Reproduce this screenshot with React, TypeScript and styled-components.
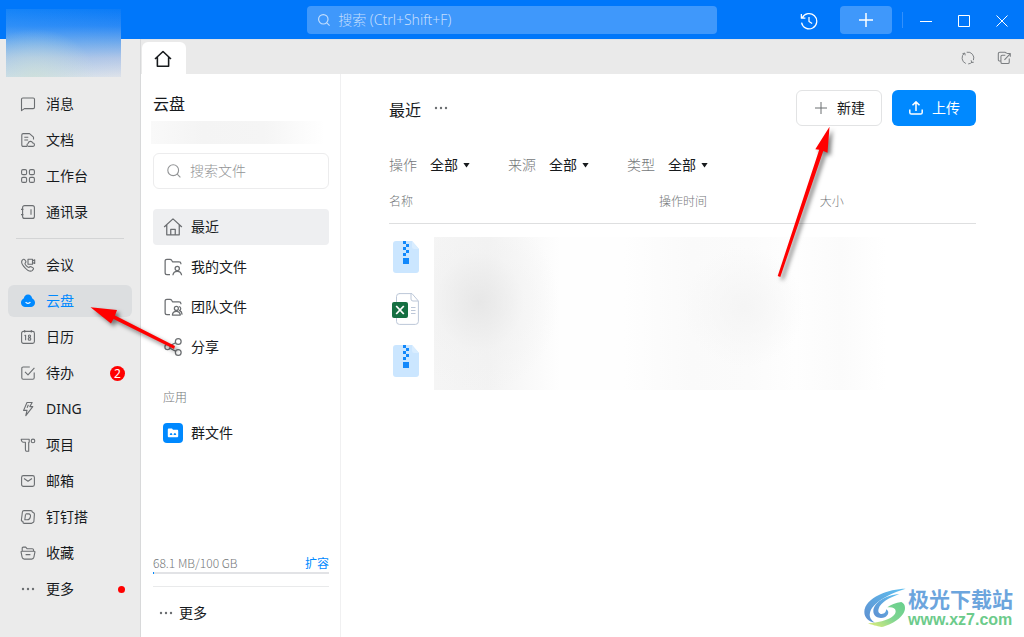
import React from "react";
import styled, { createGlobalStyle, css } from "styled-components";

const Global = createGlobalStyle`
  *, *::before, *::after { box-sizing: border-box; }
  body {
    margin: 0;
    background: #fff;
    color: #171a1d;
    font-family: "Noto Sans", "Noto Sans CJK SC", sans-serif;
    font-size: 14px;
    font-weight: 400;
    line-height: 20px;
  }
  button, input, select { font: inherit; color: inherit; }
  button { cursor: pointer; border: 0; background: none; padding: 0; }
  h1, h2, h3, p, ul { margin: 0; padding: 0; font-weight: inherit; }
  ul { list-style: none; }
  a { color: inherit; text-decoration: none; }
`;

const Page = styled.div`
  position: relative;
  display: flex;
  flex-direction: column;
  min-height: 100vh;
  overflow: hidden;
`;

const Header = styled.header`
  display: grid;
  grid-template-columns: 3fr 4fr 3fr;
  align-items: center;
  height: 39px;
  background: #0077fa;
  color: #fff;
`;

const HeaderSearch = styled.label`
  grid-column: 2;
  display: flex;
  align-items: center;
  gap: 7px;
  height: 28px;
  padding: 0 10px;
  border-radius: 4px;
  background: #3f98fb;
  color: #c3defd;
`;

const PlainInput = styled.input`
  flex: 1;
  min-width: 0;
  padding: 0;
  border: 0;
  outline: 0;
  background: none;
  font-weight: 300;
  &::placeholder { color: currentColor; opacity: 1; }
`;

const WindowTools = styled.div`
  display: flex;
  align-items: center;
  justify-content: flex-end;
  padding-right: 12px;
`;

const WindowButton = styled.button`
  display: grid;
  place-items: center;
  width: 20px;
  height: 28px;
  padding-top: 2px;
  margin-left: 18px;
`;

const AddButton = styled.button`
  display: grid;
  place-items: center;
  width: 52px;
  height: 28px;
  margin-left: 21px;
  border-radius: 4px;
  background: #3f98fb;
`;

const ToolDivider = styled.span`
  width: 1px;
  height: 16px;
  margin: 0 -5px 0 10px;
  background: #3390fb;
`;

const Body = styled.div`
  display: flex;
  flex: 1;
`;

const Sidebar = styled.nav`
  flex: none;
  width: 141px;
  padding: 49px 8px 8px;
  border-right: 1px solid #d8d9da;
  background: #ebebeb;
`;

const Profile = styled.div`
  position: absolute;
  left: 6px;
  top: 9px;
  width: 115px;
  height: 68px;
  background:
    radial-gradient(ellipse at 25% 100%, rgba(205, 224, 214, 0.7), transparent 50%),
    linear-gradient(90deg, rgba(70, 170, 255, 0.16), rgba(0, 90, 230, 0.02)),
    linear-gradient(#0b7cf7 0%, #2b8af6 25%, #75adec 50%, #b5c9e7 72%, #e2e5ea 100%);
`;

const SideList = styled.ul`
  display: flex;
  flex-direction: column;
  gap: 4px;
`;

const SideDivider = styled.hr`
  height: 1px;
  margin: 10px 8px;
  border: 0;
  background: #d3d4d5;
`;

const SideItem = styled.button<{ $active?: boolean }>`
  display: flex;
  align-items: center;
  gap: 10px;
  width: 124px;
  height: 32px;
  padding: 0 7px 0 12px;
  border-radius: 6px;
  ${(p) => p.$active && css`background: #dcdee0; color: #0089ff;`}
  svg { color: ${(p) => (p.$active ? "#0089ff" : "#6b6e71")}; }
`;

const Count = styled.span`
  width: 15px;
  height: 15px;
  margin-left: auto;
  border-radius: 8px;
  background: #f00;
  color: #fff;
  font-size: 12px;
  line-height: 15px;
  text-align: center;
`;

const Dot = styled.span`
  width: 7px;
  height: 7px;
  margin-left: auto;
  border-radius: 4px;
  background: #f00;
`;

const Workspace = styled.div`
  display: flex;
  flex: 1;
  flex-direction: column;
  min-width: 0;
`;

const TabStrip = styled.div`
  display: flex;
  align-items: flex-end;
  height: 35px;
  padding: 0 12px 0 1px;
  border-top: 1px solid #dfe3e8;
  background: #eaeaea;
`;

const HomeTab = styled.button`
  display: grid;
  place-items: center;
  width: 44px;
  height: 32px;
  margin-right: auto;
  padding: 2px 2px 0 0;
  border-radius: 6px 6px 0 0;
  background: #fff;
`;

const StripButton = styled.button`
  display: grid;
  place-items: center;
  width: 16px;
  height: 32px;
  margin-left: 20px;
  color: #7b7e81;
`;

const Columns = styled.div`
  display: flex;
  flex: 1;
`;

const DrivePanel = styled.aside`
  display: flex;
  flex: none;
  flex-direction: column;
  width: 200px;
  padding: 18px 11px 14px 12px;
  border-right: 1px solid #f0f0f1;
`;

const Title = styled.h1`
  font-size: 16px;
  line-height: 24px;
`;

const OrgName = styled.div`
  height: 23px;
  margin: 5px 4px 9px -2px;
  background: linear-gradient(90deg, #f9f9f9, #f4f4f4 30%, #f5f5f5 65%, #fff);
`;

const FileSearch = styled.label`
  display: flex;
  align-items: center;
  gap: 8px;
  height: 36px;
  margin-bottom: 20px;
  padding: 0 12px;
  border: 1px solid #ececed;
  border-radius: 6px;
  color: #929496;
`;

const DriveList = styled.ul`
  display: flex;
  flex-direction: column;
  gap: 4px;
`;

const DriveItem = styled.button<{ $active?: boolean }>`
  display: flex;
  align-items: center;
  gap: 8px;
  width: 100%;
  height: 36px;
  padding: 0 10px;
  border-radius: 4px;
  background: ${(p) => (p.$active ? "#eeeff1" : "none")};
  svg { color: #6b6e71; }
`;

const GroupTitle = styled.h2`
  margin: 23px 10px 7px;
  color: #747779;
  font-size: 12px;
  font-weight: 300;
`;

const DriveFoot = styled.div`
  margin-top: auto;
`;

const Quota = styled.div`
  display: flex;
  justify-content: space-between;
  color: #747779;
  font-family: "Noto Sans CJK SC", sans-serif;
  font-size: 12px;
  font-weight: 300;
  line-height: 18px;
  a { color: #0089ff; font-weight: 400; }
`;

const QuotaBar = styled.div`
  height: 2px;
  margin-bottom: 12px;
  background: linear-gradient(90deg, #0089ff 1px, #e2e3e6 1px);
`;

const FootMore = styled.button`
  display: flex;
  align-items: center;
  gap: 5px;
  width: 100%;
  padding: 16px 5px 0;
  border-top: 1px solid #e9eaeb;
  svg { color: #6b6e71; }
`;

const Main = styled.main`
  position: relative;
  flex: 1;
  min-width: 0;
  padding: 16px 48px;
`;

const MainHead = styled.div`
  display: flex;
  align-items: center;
  gap: 10px;
  height: 36px;
  margin-bottom: 29px;
`;

const MainTitle = styled(Title)`
  padding-top: 4px;
`;

const MoreButton = styled.button`
  display: grid;
  margin: 0 auto 0 2px;
  color: #6b6e71;
`;

const ActionButton = styled.button<{ $primary?: boolean }>`
  display: flex;
  align-items: center;
  justify-content: center;
  gap: 8px;
  height: 36px;
  padding: 0 16px;
  border-radius: 6px;
  ${(p) =>
    p.$primary
      ? css`background: #0089ff; color: #fff;`
      : css`
          border: 1px solid #e2e3e4;
          background: #fff;
          svg { color: #6b6e71; }
        `}
`;

const Filters = styled.div`
  display: flex;
  gap: 37px;
  margin-bottom: 6px;
`;

const Filter = styled.label`
  display: flex;
  align-items: center;
  gap: 13px;
  color: #747779;
  font-weight: 300;
`;

const SelectWrap = styled.span`
  display: flex;
  align-items: center;
  color: #171a1d;
  select {
    width: 32px;
    height: 20px;
    margin-right: 1px;
    padding: 0;
    border: 0;
    appearance: none;
    background: none;
    font-weight: 400;
  }
`;

const Caret = styled.span`
  width: 7px;
  height: 5px;
  margin-right: 1px;
  background: #171a1d;
  clip-path: polygon(0 0, 100% 0, 50% 100%);
`;

const TableArea = styled.div`
  position: relative;
`;

const FileTable = styled.table`
  width: 100%;
  border-collapse: separate;
  border-spacing: 0;
  table-layout: fixed;
  margin-bottom: 20px;
  th {
    height: 43px;
    padding: 0;
    border-bottom: 1px solid #dedfe0;
    color: #747779;
    font-size: 12px;
    font-weight: 300;
    text-align: left;
  }
  td { height: 52px; padding: 0 3px; }
  tbody::before { content: ""; display: block; height: 7px; }
  svg { display: block; }
`;

const Column = styled.col<{ $width: string }>`
  width: ${(p) => p.$width};
`;

const HiddenNames = styled.div`
  position: absolute;
  left: 45px;
  right: 90px;
  bottom: -3px;
  height: 153px;
  background:
    radial-gradient(ellipse 80px 90px at 45px 65px, rgba(228, 228, 228, 0.8), rgba(240, 240, 240, 0.4) 55%, transparent),
    radial-gradient(ellipse 60px 60px at 310px 70px, rgba(244, 244, 244, 0.9), transparent),
    linear-gradient(90deg, #f5f5f5, #f3f3f3 12%, #fefefe 28%, #fefefe 42%, #fafafa 57%, #fbfbfb 70%, #fefefe 80%, #fbfbfb 90%, #fff);
`;

const Pointer = styled.svg<{ $x: string; $top: number }>`
  position: absolute;
  ${(p) => p.$x};
  top: ${(p) => p.$top}px;
  pointer-events: none;
  filter: drop-shadow(3px 3px 2px rgba(0, 0, 0, 0.5));
`;

const Watermark = styled.div`
  position: absolute;
  right: 11px;
  bottom: 8px;
  display: flex;
  align-items: center;
  gap: 2px;
`;

const SiteName = styled.div`
  color: #6ca5dd;
  font-size: 21px;
  font-weight: 700;
  line-height: 24px;
`;

const SiteUrl = styled.div`
  color: #6ccb8b;
  font-family: "Liberation Sans", sans-serif;
  font-size: 16px;
  font-weight: 700;
  line-height: 18px;
`;

function Icon({ size = 16, children, width = 1.1 }: { size?: number; children: React.ReactNode; width?: number }) {
  return (
    <svg width={size} height={size} viewBox="0 0 16 16" fill="none" stroke="currentColor" strokeWidth={width} strokeLinejoin="round" aria-hidden="true">
      {children}
    </svg>
  );
}

const dots = (
  <g fill="currentColor" stroke="none">
    <circle cx="3" cy="8" r="1.2" /><circle cx="8" cy="8" r="1.2" /><circle cx="13" cy="8" r="1.2" />
  </g>
);

const icons = {
  message: <path d="M2.8 2h10.4c.8 0 1.3.5 1.3 1.3v8c0 .8-.5 1.3-1.3 1.3H4.4L1.5 14.6V3.3C1.5 2.500 2 2 2.800 2z" />,
  doc: <><path d="M7 14.4H3.2c-.9 0-1.4-.6-1.4-1.4V3c0-.9.6-1.4 1.4-1.4h6.3l4 3.600v2.300M4.300 5.200h4M4.300 8h3.800" /><path d="M8.700 14.400c-1.800 0-2.500-2.400-.6-3 .4-2.500 3.800-2.800 4.500-.5 2.500.1 2.400 3.500.2 3.500z" /></>,
  apps: <><rect x="1.600" y="1.600" width="5" height="5" rx="1.400" /><rect x="9.400" y="1.600" width="5" height="5" rx="1.400" /><rect x="1.600" y="9.400" width="5" height="5" rx="1.400" /><rect x="9.400" y="9.400" width="5" height="5" rx="1.400" /></>,
  contacts: <><rect x="2.600" y="1.600" width="11.800" height="12.800" rx="2" /><path d="M11 5.200v5.600M1 5.400h2.400M1 10.600h2.400" /></>,
  meeting: <><path d="M2.100 3.400c1-1.400 2-1.500 2.700-.6l1 1.500c.4.8.1 1.200-.8 2.100-.3 1 2.700 4.200 4 4 .8-.9 1.400-1 2.100-.7l2 1.200c.8.6.4 1.500-.9 2.700C8.900 16.200-.2 7 2.100 3.400z" /><path d="M8 2.200h4.500v5H8zM12.500 4l2.200-1.200v3.600l-2.200-1" /></>,
  drive: <><path d="M8 1.400c2.600 0 3.700 1.800 4.100 3.800 4.400 2.200 3.600 8.700-.9 8.700H4.800C.3 13.900-.5 7.400 3.900 5.200 4.300 3.200 5.400 1.400 8 1.400z" fill="currentColor" stroke="none" /><path d="M5.600 9.200c1.200 1.600 3.600 1.600 4.800 0" stroke="#fff" /></>,
  calendar: <><rect x="1.600" y="2.400" width="12.800" height="12" rx="1.800" /><path d="M4.700.9v2.500M11.300.9v2.500M5.600 6v5.200M4.600 6.800l1-.8" /><circle cx="9.500" cy="7.100" r="1.100" /><circle cx="9.500" cy="9.900" r="1.300" /></>,
  todo: <><path d="M9.800 2H3.200c-.9 0-1.400.6-1.400 1.400v9.400c0 .9.6 1.400 1.400 1.400h9.600c.9 0 1.400-.6 1.400-1.400V7.500" /><path d="M5 6.800l3 3 6.400-7" /></>,
  ding: <path d="M7 1.500h5.200L9.800 5.600h3L5.800 14.600l1.200-5.200H3.600zM8.400 3.700L7.100 6.800" />,
  project: <><path d="M1.200 2.300h8v3H8.700v8.900H6.200c-.8-.6-.8-1.200-.8-2V5.300H3.400c-1.300 0-2-1-2.200-3z" /><circle cx="13" cy="3.900" r="1.800" /></>,
  mail: <><rect x="1.600" y="2.600" width="12.800" height="10.800" rx="1.800" /><path d="M4 5.500l4 2.800 4-2.800" /></>,
  build: <><path d="M4 1.600h6.800c.9 0 1.500.6 1.500 1.400l1.300.8c.6.300.9.800.8 1.500l-.5 7c-.1.600-.4 1-.9 1.200l-1.300.7c-.3.200-.6.200-1 .2H4.300c-.9 0-1.400-.6-1.400-1.300v-.9h-.4c-.8 0-1.200-.5-1.100-1.200l1-8c.1-.9.700-1.400 1.600-1.400z" /><path d="M5.700 4.900h2.900c3.200 0 2 5.800-1.300 5.800H4.800l.7-5.300" /></>,
  favorite: <><path d="M2.200 6.200V3.300c0-.7.400-1.200 1.100-1.200h2.400L7 3.700h5.300c.8 0 1.200.4 1.200 1.100v1.400M1.800 6.200h12.400c.6 0 .9.4.7 1l-1 5c-.3 1.300-1 1.900-2.200 1.900H4.300c-1.200 0-1.900-.6-2.200-1.900l-1-5c-.2-.6.1-1 .7-1zM5.600 9.600h4.800" /></>,
  more: dots,
};

type Entry = { icon: keyof typeof icons; label: string; active?: boolean; count?: number; dot?: boolean };

const mainEntries: Entry[] = [
  { icon: "message", label: "消息" },
  { icon: "doc", label: "文档" },
  { icon: "apps", label: "工作台" },
  { icon: "contacts", label: "通讯录" },
];

const toolEntries: Entry[] = [
  { icon: "meeting", label: "会议" },
  { icon: "drive", label: "云盘", active: true },
  { icon: "calendar", label: "日历" },
  { icon: "todo", label: "待办", count: 2 },
  { icon: "ding", label: "DING" },
  { icon: "project", label: "项目" },
  { icon: "mail", label: "邮箱" },
  { icon: "build", label: "钉钉搭" },
  { icon: "favorite", label: "收藏" },
  { icon: "more", label: "更多", dot: true },
];

function SideEntries({ entries }: { entries: Entry[] }) {
  return (
    <SideList>
      {entries.map((e) => (
        <li key={e.label}>
          <SideItem $active={e.active}>
            <Icon>{icons[e.icon]}</Icon>
            {e.label}
            {e.count && <Count>{e.count}</Count>}
            {e.dot && <Dot />}
          </SideItem>
        </li>
      ))}
    </SideList>
  );
}

const searchGlyph = <><circle cx="7.200" cy="7.200" r="5.400" /><path d="M11.200 11.200l3.200 3.200" /></>;
const folder = "M5.600 14H3.200c-.9 0-1.500-.6-1.500-1.500V3.200c0-.9.6-1.400 1.400-1.400h2.500c.6 0 1 .2 1.300.8l.7 1.200h5.200c.9 0 1.500.6 1.500 1.400v.6";

const driveEntries = [
  { label: "最近", active: true, glyph: <path d="M.9 8L8 1.500 15.100 8M3 6.300v7.900h10V6.300M6.200 14V9.800h3.600V14" /> },
  { label: "我的文件", glyph: <><path d={folder} /><circle cx="11.400" cy="9.100" r="1.700" /><path d="M7.900 14.600c.3-2 1.600-3.100 3.500-3.100s3.200 1.100 3.500 3.100" /></> },
  { label: "团队文件", glyph: <><path d={folder} /><circle cx="10.700" cy="9.100" r="1.600" /><path d="M7.500 14.400c.2-1.800 1.400-2.900 3.200-2.900s2.800 1 3.200 2.900zM12.700 7.600c1.900.2 1.900 2.800.5 3.100 1.300.6 2 1.700 2.100 3.400" /></> },
  { label: "分享", glyph: <><circle cx="3.600" cy="7.900" r="2.100" /><circle cx="12.200" cy="3.600" r="2.300" /><circle cx="12.200" cy="12.400" r="2.300" /><path d="M5.500 7L10.100 4.600M5.500 8.900l4.600 2.500" /></> },
];

function ZipIcon() {
  return (
    <svg width="28" height="32" viewBox="0 0 28 32" role="img" aria-label="ZIP">
      <path d="M4 0h16l7 8v21a3 3 0 0 1-3 3H4a3 3 0 0 1-3-3V3a3 3 0 0 1 3-3z" fill="#cbe6ff" />
      <path d="M20 0l7 8h-5a2 2 0 0 1-2-2z" fill="#d9edff" />
      <path d="M11 0h3v3h-3zM14 3h3v3h-3zM11 6h3v3h-3zM14 9h3v3h-3zM11 12h3v3h-3zM11 17h6v6h-6z" fill="#1288fb" />
    </svg>
  );
}

function SheetIcon() {
  return (
    <svg width="28" height="32" viewBox="0 0 28 32" fill="none" role="img" aria-label="XLSX">
      <path d="M7 .6h13l6.400 7.400v20.400a3 3 0 0 1-3 3H7.500a3 3 0 0 1-3-3V3.600a3 3 0 0 1 3-3z" stroke="#bcc7d8" fill="#fff" />
      <path d="M19 1v5a2 2 0 0 0 2 2h5M19 14.500h4.500M19 17.500h4.500M19 20.500h4.500" stroke="#bcc7d8" />
      <rect x="0" y="9" width="16" height="16" rx="2" fill="#156f42" />
      <path d="M4.200 13l7.600 8M11.800 13l-7.600 8" stroke="#fff" strokeWidth="1.800" />
    </svg>
  );
}

export default function App() {
  return (
    <Page>
      <Global />
      <Header>
        <HeaderSearch>
          <Icon size={14} width={1.300}>{searchGlyph}</Icon>
          <PlainInput aria-label="搜索" placeholder="搜索 (Ctrl+Shift+F)" />
        </HeaderSearch>
        <WindowTools>
          <WindowButton aria-label="历史">
            <Icon size={18} width={1.100}>
              <path d="M2 5.200A6.800 6.800 0 1 1 1.400 9.500M1.200 1.800v3.700h3.600M8 4.500v4l2.800 1.800" />
            </Icon>
          </WindowButton>
          <AddButton aria-label="添加">
            <Icon width={1.500}><path d="M8 1v14M1 8h14" /></Icon>
          </AddButton>
          <ToolDivider />
          <WindowButton aria-label="最小化"><Icon width={1}><path d="M2 8.500h12" /></Icon></WindowButton>
          <WindowButton aria-label="最大化"><Icon width={1}><path d="M2.500 2.500h11v11h-11z" /></Icon></WindowButton>
          <WindowButton aria-label="关闭"><Icon width={1}><path d="M2.500 2.500l11 11M13.500 2.500l-11 11" /></Icon></WindowButton>
        </WindowTools>
      </Header>

      <Body>
        <Sidebar>
          <SideEntries entries={mainEntries} />
          <SideDivider />
          <SideEntries entries={toolEntries} />
        </Sidebar>

        <Workspace>
          <TabStrip>
            <HomeTab aria-label="主页">
              <Icon size={18} width={1.400}><path d="M.9 8L8 1.300 15.100 8M3 6.500v7.900h10V6.500" /></Icon>
            </HomeTab>
            <StripButton aria-label="刷新">
              <Icon size={14} width={1.100}>
                <path d="M5.500 14.300A6.800 6.800 0 0 1 4 2.500M6.500 1.400A6.800 6.800 0 0 1 14.200 10.500M12.800 12.600a6.800 6.800 0 0 1-4.600 2.200M1.600 3.200l2.700-.9.500 2.700M14.600 12.800l-2.400.4-.6-2.600" />
              </Icon>
            </StripButton>
            <StripButton aria-label="在新窗口打开">
              <Icon size={14} width={1.200}>
                <path d="M14 8.500v4.300c0 .9-.6 1.500-1.500 1.500H6c-.9 0-1.500-.6-1.500-1.500V6.300c0-.9.6-1.500 1.500-1.500h3.500M4.500 11.500H3.200c-1 0-1.700-.6-1.700-1.600V3.200c0-1 .7-1.700 1.700-1.700h6c1 0 1.500.5 1.600 1.500M8.500 10.200l6.500-7M11.500 2.800h3.700v3.700" />
              </Icon>
            </StripButton>
          </TabStrip>

          <Columns>
            <DrivePanel>
              <Title as="h2">云盘</Title>
              <OrgName />
              <FileSearch>
                <Icon>{searchGlyph}</Icon>
                <PlainInput aria-label="搜索文件" placeholder="搜索文件" />
              </FileSearch>
              <DriveList>
                {driveEntries.map((e) => (
                  <li key={e.label}>
                    <DriveItem $active={e.active}>
                      <Icon size={20} width={1}>{e.glyph}</Icon>
                      {e.label}
                    </DriveItem>
                  </li>
                ))}
              </DriveList>
              <GroupTitle>应用</GroupTitle>
              <DriveItem>
                <svg width="20" height="20" viewBox="0 0 20 20" aria-hidden="true">
                  <rect width="20" height="20" rx="4" fill="#0089ff" />
                  <path d="M6 5.500h3l1 1.200h4c.7 0 1.200.5 1.200 1.100V13c0 .8-.5 1.300-1.300 1.300H6.100c-.8 0-1.300-.5-1.300-1.300V6.700C4.800 6 5.300 5.500 6 5.500z" fill="#fff" />
                  <path d="M6.800 12c0-2.800 2.600-2.800 2.600 0zM10.600 12c0-2.800 2.600-2.800 2.600 0z" fill="#0089ff" />
                </svg>
                群文件
              </DriveItem>
              <DriveFoot>
                <Quota>
                  <span>68.1 MB/100 GB</span>
                  <a href="#expand">扩容</a>
                </Quota>
                <QuotaBar />
                <FootMore><Icon>{dots}</Icon>更多</FootMore>
              </DriveFoot>
            </DrivePanel>

            <Main>
              <MainHead>
                <MainTitle>最近</MainTitle>
                <MoreButton aria-label="更多操作"><Icon>{dots}</Icon></MoreButton>
                <ActionButton>
                  <Icon width={1}><path d="M8 2v12M2 8h12" /></Icon>新建
                </ActionButton>
                <ActionButton $primary>
                  <Icon width={1.500}><path d="M8 11V2M4.500 5.300L8 1.900l3.500 3.400M1.800 9.500v3c0 1 .6 1.600 1.600 1.600h9.200c1 0 1.600-.6 1.600-1.600v-3" /></Icon>上传
                </ActionButton>
              </MainHead>
              <Filters>
                {["操作", "来源", "类型"].map((name) => (
                  <Filter key={name}>
                    {name}
                    <SelectWrap>
                      <select><option>全部</option></select>
                      <Caret />
                    </SelectWrap>
                  </Filter>
                ))}
              </Filters>
              <TableArea>
                <FileTable>
                  <colgroup>
                    <Column $width="46%" />
                    <Column $width="27.4%" />
                    <Column $width="auto" />
                  </colgroup>
                  <thead>
                    <tr><th>名称</th><th>操作时间</th><th>大小</th></tr>
                  </thead>
                  <tbody>
                    <tr><td><ZipIcon /></td><td /><td /></tr>
                    <tr><td><SheetIcon /></td><td /><td /></tr>
                    <tr><td><ZipIcon /></td><td /><td /></tr>
                  </tbody>
                </FileTable>
                <HiddenNames />
              </TableArea>
              <Pointer $x="right: 188px" $top={52} width="60" height="156" viewBox="0 0 60 156">
                <path d="M53.500 .7L51.500 26.700l-4.200-1.700L4.300 151l-2.600-1L43.200 23.800l-3.900-.6z" fill="#f00" />
              </Pointer>
            </Main>
          </Columns>
        </Workspace>
      </Body>

      <Profile />
      <Pointer $x="left: 90px" $top={306} width="92" height="48" viewBox="0 0 92 48">
        <path d="M.5 1.200L27 4l-2 5.500L85 40l-1 3L23.500 13 21 17.500z" fill="#f00" />
      </Pointer>

      <Watermark>
        <svg width="42" height="40" viewBox="74 50 126 120" aria-hidden="true">
          <defs>
            <linearGradient id="sky" x1="0" y1="1" x2="1" y2="0">
              <stop offset="0" stopColor="#5e8fd0" /><stop offset="1" stopColor="#5fc0f0" />
            </linearGradient>
            <linearGradient id="leaf" x1="0" y1="1" x2="1" y2="0">
              <stop offset="0" stopColor="#e6ee7a" /><stop offset="0.5" stopColor="#7fd592" /><stop offset="1" stopColor="#68cf8c" />
            </linearGradient>
          </defs>
          <path d="M199 52C150 52 76 78 75 122c0 18 14 30 32 32-12-7-18-18-15-30 6-30 60-58 107-72z" fill="url(#sky)" />
          <path d="M180 68c-42 4-78 26-78 52 0 17 20 25 36 17 11-6 12-19 2-23 1 8-5 14-13 14-8-1-12-7-9-16 6-19 32-33 62-44z" fill="url(#sky)" />
          <path d="M186 92c-17 2-32 8-42 16 14-2 24 1 25 11 1 18-33 34-83 37 20 8 33 9 40 11 30-6 72-31 71-58 0-8-4-14-11-17z" fill="url(#leaf)" />
        </svg>
        <div>
          <SiteName>极光下载站</SiteName>
          <SiteUrl>www.xz7.com</SiteUrl>
        </div>
      </Watermark>
    </Page>
  );
}
